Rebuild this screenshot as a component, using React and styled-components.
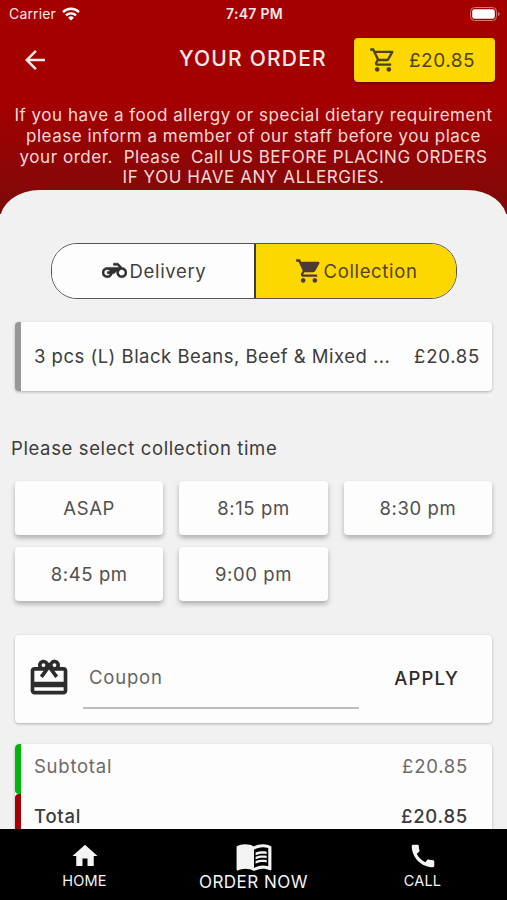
import React from "react";
import styled, { createGlobalStyle } from "styled-components";
import {
  MdArrowBack,
  MdCall,
  MdCardGiftcard,
  MdHome,
  MdMenuBook,
  MdOutlineShoppingCart,
  MdShoppingCart,
} from "react-icons/md";

const GlobalStyle = createGlobalStyle`
  * {
    box-sizing: border-box;
  }
  body {
    margin: 0;
    background: #f1f1f1;
    color: #3c3c3c;
    font-family: "Inter", "Liberation Sans", sans-serif;
  }
  button {
    border: 0;
    padding: 0;
    background: none;
    color: inherit;
    font: inherit;
  }
  svg {
    display: block;
    flex-shrink: 0;
  }
`;

const Screen = styled.div`
  height: 900px;
  display: flex;
  flex-direction: column;
  overflow: hidden;
`;

const Header = styled.header`
  height: 214px;
  flex-shrink: 0;
  background: linear-gradient(#a50000 0, #a50000 100px, #7c0a0a 214px);
  color: #fbe9e9;
`;

const StatusBar = styled.div`
  height: 27px;
  padding: 0 7px 0 9px;
  display: grid;
  grid-template-columns: 1fr auto 1fr;
  align-items: center;
  font-size: 14px;
  letter-spacing: 0.15px;
`;

const Carrier = styled.div`
  display: flex;
  align-items: center;
  gap: 6px;
`;

const Clock = styled.div`
  font-size: 14px;
  font-weight: 600;
  letter-spacing: 0.3px;
`;

const BatteryIcon = styled.svg`
  justify-self: end;
`;

const TitleBar = styled.div`
  height: 65px;
  padding: 1px 12px 0 20px;
  display: grid;
  grid-template-columns: 140px 1fr 141px;
  align-items: center;
`;

const Title = styled.h1`
  margin: 0 0 3px;
  padding-left: 19px;
  white-space: nowrap;
  font-size: 21px;
  font-weight: 500;
  letter-spacing: 1.2px;
`;

const CartButton = styled.button`
  height: 44px;
  padding: 0 20px 0 15px;
  display: flex;
  align-items: center;
  justify-content: space-between;
  border-radius: 4px;
  background: #fdd700;
  box-shadow: 0 1px 3px rgba(0, 0, 0, 0.4);
  color: #4d4318;
  font-size: 19px;
  letter-spacing: 0.5px;
`;

const Notice = styled.p`
  margin: 13px 0 0;
  text-align: center;
  white-space: pre;
  font-size: 17px;
  line-height: 20.8px;
  color: #f8d9d5;
`;

const NoticeLine = styled.span`
  display: block;
  letter-spacing: ${({ $spacing }) => $spacing}px;
`;

const Sheet = styled.main`
  position: relative;
  flex: 1;
  min-height: 0;
  margin-top: -24px;
  padding: 53px 15px 0;
  border-radius: 40px 40px 0 0 / 30px 30px 0 0;
  background: #f1f1f1;
  overflow: hidden;
`;

const Toggle = styled.div`
  width: 406px;
  height: 56px;
  margin: 0 auto 0 36px;
  display: flex;
  border: 1px solid #555;
  border-radius: 26px;
  overflow: hidden;
`;

const ToggleOption = styled.button`
  flex: 1;
  display: flex;
  align-items: center;
  justify-content: center;
  gap: ${({ $active }) => ($active ? 1 : 3)}px;
  padding: ${({ $active }) => ($active ? "0 0 1px" : "0 0 1px 2px")};
  background: ${({ $active }) => ($active ? "#fdd700" : "#fdfdfd")};
  color: ${({ $active }) => ($active ? "#54431f" : "#3f3f3f")};
  font-size: 18.5px;
  letter-spacing: 0.65px;

  & + & {
    border-left: 2px solid #3c3c3c;
  }
  svg {
    color: ${({ $active }) => ($active ? "#4b3a38" : "#2f2f2f")};
  }
`;

const Card = styled.section`
  border-radius: 4px;
  background: #fdfdfd;
  box-shadow: 0 1px 3px rgba(0, 0, 0, 0.28);
  overflow: hidden;
`;

const ItemCard = styled(Card)`
  height: 69px;
  margin-top: 23px;
  padding: 0 12px 2px 13px;
  display: flex;
  align-items: center;
  justify-content: space-between;
  border-left: 6px solid #979797;
  font-size: 18.5px;
`;

const ItemName = styled.span`
  white-space: nowrap;
  letter-spacing: 0.49px;
`;

const Price = styled.span`
  letter-spacing: 0.75px;
`;

const Prompt = styled.h2`
  margin: 45px 0 0 -4px;
  line-height: 24px;
  font-size: 18.5px;
  font-weight: 400;
  letter-spacing: 0.62px;
`;

const Times = styled.div`
  margin-top: 21px;
  display: grid;
  grid-template-columns: repeat(3, 1fr);
  gap: 12px 16px;
`;

const TimeButton = styled.button`
  height: 54px;
  padding: 0 0 1px;
  border-radius: 4px;
  background: #fdfdfd;
  box-shadow: 0 3px 5px rgba(0, 0, 0, 0.28);
  color: #505050;
  font-size: 18.5px;
  letter-spacing: 0.6px;
`;

const CouponCard = styled(Card)`
  height: 88px;
  margin-top: 34px;
  padding: 0 33px 3px 12px;
  display: flex;
  align-items: center;
  color: #2c2c2c;
`;

const CouponField = styled.div`
  width: 276px;
  height: 60px;
  margin: 2px 0 0 12px;
  padding: 0 6px 1px;
  display: flex;
  align-items: center;
  border-bottom: 2px solid #bebebe;
  color: #666;
  font-size: 18.5px;
  letter-spacing: 0.8px;
`;

const ApplyButton = styled.button`
  margin-left: auto;
  white-space: nowrap;
  font-size: 18.5px;
  font-weight: 500;
  letter-spacing: 1.1px;
`;

const TotalsCard = styled(Card)`
  height: 150px;
  margin-top: 21px;
`;

const TotalRow = styled.div`
  height: 50px;
  padding: 0 24px 7px 13px;
  display: flex;
  align-items: center;
  justify-content: space-between;
  border-left: 6px solid ${({ $accent }) => $accent};
  border-radius: 4px 0 0 4px;
  color: ${({ $strong }) => ($strong ? "#3c3c3c" : "#6a6a6a")};
  font-size: 18.5px;
  font-weight: ${({ $strong }) => ($strong ? 500 : 400)};
  letter-spacing: 0.75px;
`;

const BottomNav = styled.nav`
  height: 71px;
  flex-shrink: 0;
  display: grid;
  grid-template-columns: repeat(3, 1fr);
  background: #000;
  color: #f4f4f4;
`;

const NavItem = styled.button`
  display: flex;
  flex-direction: column;
  align-items: center;
  padding-top: ${({ $large }) => ($large ? 8 : 12)}px;
  font-size: ${({ $large }) => ($large ? 17 : 14.5)}px;
  line-height: ${({ $large }) => ($large ? 15 : 19)}px;
  letter-spacing: ${({ $large }) => ($large ? 0.5 : 0.2)}px;
  white-space: nowrap;
`;

const WifiIcon = () => (
  <svg width="18" height="14" viewBox="0 0 18 14" fill="none" stroke="#fff" strokeWidth="2.4">
    <path d="M1 5.1a11.4 11.4 0 0 1 16 0" />
    <path d="M4 8.4a7.2 7.2 0 0 1 10 0" />
    <path d="M9 13.6 6.1 10.7a4.2 4.2 0 0 1 5.8 0z" fill="#fff" stroke="none" />
  </svg>
);

const Battery = () => (
  <BatteryIcon width="30" height="14" viewBox="0 0 30 14">
    <rect x="0.5" y="0.5" width="26" height="13" rx="4" fill="none" stroke="#d57878" />
    <rect x="2.2" y="2.2" width="22.6" height="9.6" rx="2.2" fill="#fff" />
    <path d="M28 5v4c1-.3 1.6-1 1.6-2S29 5.3 28 5z" fill="#d57878" />
  </BatteryIcon>
);

const MotorcycleIcon = () => (
  <svg width="25" height="25" viewBox="0 0 24 24" fill="currentColor" stroke="currentColor" strokeWidth="0.5">
    <path d="M19.44 9.03L15.41 5H11v2h3.59l2 2H5c-2.8 0-5 2.2-5 5s2.2 5 5 5c2.46 0 4.45-1.69 4.9-4h1.65l2.77-2.77c-.21.54-.32 1.14-.32 1.77 0 2.8 2.2 5 5 5s5-2.2 5-5c0-2.65-1.97-4.77-4.56-4.97zM7.82 15C7.4 16.15 6.28 17 5 17c-1.63 0-3-1.37-3-3s1.37-3 3-3c1.28 0 2.4.85 2.82 2H5v2h2.82zM19 17c-1.66 0-3-1.34-3-3s1.34-3 3-3 3 1.34 3 3-1.34 3-3 3z" />
  </svg>
);

const notice = [
  { text: "If you have a food allergy or special dietary requirement", spacing: 0.53 },
  { text: "please inform a member of our staff before you place", spacing: 0.51 },
  { text: "your order.  Please  Call US BEFORE PLACING ORDERS", spacing: 0.54 },
  { text: "IF YOU HAVE ANY ALLERGIES.", spacing: 0.58 },
];

const times = ["ASAP", "8:15 pm", "8:30 pm", "8:45 pm", "9:00 pm"];

const App = () => {
  return (
    <>
      <GlobalStyle />
      <Screen>
        <Header>
          <StatusBar>
            <Carrier>
              Carrier
              <WifiIcon />
            </Carrier>
            <Clock>7:47 PM</Clock>
            <Battery />
          </StatusBar>
          <TitleBar>
            <MdArrowBack size={30} />
            <Title>YOUR ORDER</Title>
            <CartButton>
              <MdOutlineShoppingCart size={28} />
              £20.85
            </CartButton>
          </TitleBar>
          <Notice>
            {notice.map(({ text, spacing }) => (
              <NoticeLine key={text} $spacing={spacing}>
                {text}
              </NoticeLine>
            ))}
          </Notice>
        </Header>
        <Sheet>
          <Toggle>
            <ToggleOption>
              <MotorcycleIcon />
              Delivery
            </ToggleOption>
            <ToggleOption $active>
              <MdShoppingCart size={28} />
              Collection
            </ToggleOption>
          </Toggle>
          <ItemCard>
            <ItemName>3 pcs (L) Black Beans, Beef &amp; Mixed ...</ItemName>
            <Price>£20.85</Price>
          </ItemCard>
          <Prompt>Please select collection time</Prompt>
          <Times>
            {times.map((time) => (
              <TimeButton key={time}>{time}</TimeButton>
            ))}
          </Times>
          <CouponCard>
            <MdCardGiftcard size={44} />
            <CouponField>Coupon</CouponField>
            <ApplyButton>APPLY</ApplyButton>
          </CouponCard>
          <TotalsCard>
            <TotalRow $accent="#00b50c">
              <span>Subtotal</span>
              <span>£20.85</span>
            </TotalRow>
            <TotalRow $accent="#a50000" $strong>
              <span>Total</span>
              <span>£20.85</span>
            </TotalRow>
          </TotalsCard>
        </Sheet>
        <BottomNav>
          <NavItem>
            <MdHome size={30} />
            HOME
          </NavItem>
          <NavItem $large>
            <MdMenuBook size={38} />
            ORDER NOW
          </NavItem>
          <NavItem>
            <MdCall size={30} />
            CALL
          </NavItem>
        </BottomNav>
      </Screen>
    </>
  );
};

export default App;
